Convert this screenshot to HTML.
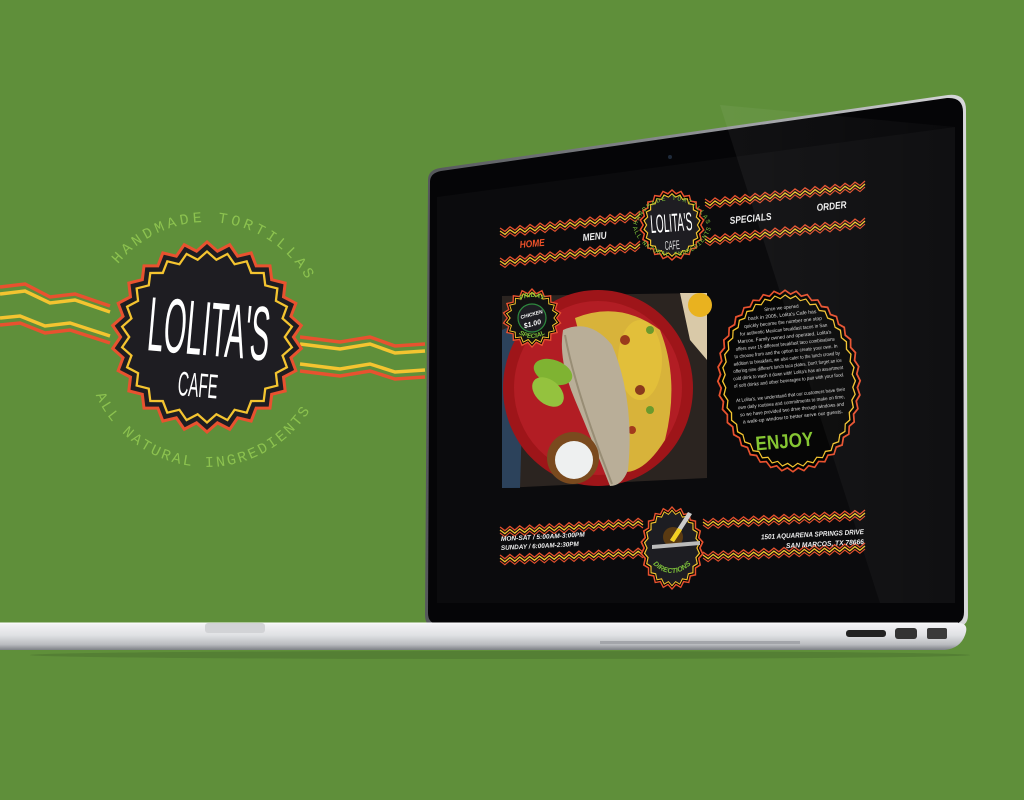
<!DOCTYPE html>
<html><head><meta charset="utf-8">
<style>
html,body{margin:0;padding:0;width:1024px;height:800px;overflow:hidden;background:#5f8f3a;}
svg{display:block}
.hand{font-family:"Liberation Sans",sans-serif;font-weight:bold;font-style:italic}
</style></head><body>
<svg id="s" width="1024" height="800" viewBox="0 0 1024 800" xmlns="http://www.w3.org/2000/svg">
<defs>
<linearGradient id="base" x1="0" y1="0" x2="0" y2="1">
<stop offset="0" stop-color="#f4f4f6"/><stop offset="0.45" stop-color="#e0e1e4"/><stop offset="0.8" stop-color="#b9bbbf"/><stop offset="1" stop-color="#7d8086"/>
</linearGradient>
<linearGradient id="rim" x1="0" y1="0" x2="1" y2="0">
<stop offset="0" stop-color="#55575b"/><stop offset="0.6" stop-color="#9a9ca0"/><stop offset="1" stop-color="#d8d8da"/>
</linearGradient>
<linearGradient id="glare" x1="0" y1="0" x2="1" y2="0">
<stop offset="0" stop-color="#fff" stop-opacity="0.05"/><stop offset="1" stop-color="#fff" stop-opacity="0.02"/>
</linearGradient>
<path id="arcTop" d="M 92 337 A 115 115 0 0 1 322 337"/>
<path id="arcBot" d="M 85 345 A 122 122 0 0 0 329 345"/>
<path id="arcTopS" d="M 637 225 A 37 37 0 0 1 707 225"/>
<path id="arcBotS" d="M 633 228 A 41 41 0 0 0 711 228"/>
<path id="arcDir" d="M 645 548 A 28 34 0 0 0 699 548"/>
<path id="arcFri" d="M 511 318 A 21 21 0 0 1 553 318"/>
<path id="arcSpec" d="M 509 315 A 23 23 0 0 0 555 315"/>
</defs>
<g id="left"></g>
<path d="M428 180 Q428 170 440 168 L948 95 Q966 93 966 110 L968 615 Q968 627 955 627 L436 627 Q425 627 425 615 Z" fill="url(#rim)"/>
<path d="M430 182 Q430 173 441 171 L947 98 Q963 97 963 112 L964 612 Q964 624 952 624 L439 624 Q428 624 428 613 Z" fill="#050507"/>
<path d="M437 197 L955 127 L955 603 L437 603 Z" fill="#0b0b0d"/>
<circle cx="670" cy="157" r="2" fill="#1e2a3a"/>
<g id="site"></g>
<path d="M720 105 L955 127 L955 603 L880 603 Z" fill="url(#glare)"/>
<path d="M0 623 L958 623 Q968 623 966 632 Q962 648 945 650 L0 650 Z" fill="url(#base)"/>
<path d="M0 623 L958 623" stroke="#fff" stroke-width="1"/>
<rect x="205" y="623" width="60" height="10" rx="3" fill="#d2d3d6"/>
<rect x="600" y="641" width="200" height="3" fill="#a3a5aa"/>
<rect x="846" y="630" width="40" height="7" rx="3" fill="#222"/>
<rect x="895" y="628" width="22" height="11" rx="3" fill="#333"/>
<rect x="927" y="628" width="20" height="11" rx="2" fill="#3a3a3a"/>
<ellipse cx="500" cy="655" rx="470" ry="4" fill="#4c7530" opacity="0.6"/>
</svg>
<script>
var NS="http://www.w3.org/2000/svg";
function el(parent,tag,attrs,text){var e=document.createElementNS(NS,tag);for(var k in attrs)e.setAttribute(k,attrs[k]);if(text!=null)e.textContent=text;parent.appendChild(e);return e;}
function star(cx,cy,rx,ry,n,d){var p=[];for(var i=0;i<2*n;i++){var a=i*Math.PI/n;var f=(i%2?1:1-d);p.push((cx+rx*f*Math.cos(a)).toFixed(1)+","+(cy+ry*f*Math.sin(a)).toFixed(1));}return p.join(" ");}
function zig(x1,y1,x2,y2,step,amp){var dx=x2-x1,dy=y2-y1,L=Math.sqrt(dx*dx+dy*dy),n=Math.round(L/step),p=[];for(var i=0;i<=n;i++){var t=i/n;var o=(i%2?amp:-amp);p.push((x1+dx*t).toFixed(1)+","+(y1+dy*t+o).toFixed(1));}return p.join(" ");}
var L=document.getElementById("left"),S=document.getElementById("site");
function pl(g,pts,c,w){el(g,"polyline",{points:pts,fill:"none",stroke:c,"stroke-width":w,"stroke-linejoin":"miter"});}
pl(L,"0,287 25,284 50,297 75,294 110,306","#e8522f",3.5);
pl(L,"0,294 25,291 50,303 75,300 110,312","#f4c430",3.5);
pl(L,"0,318 20,316 45,326 70,323 110,336","#f4c430",3.5);
pl(L,"0,325 20,323 45,333 70,330 110,343","#e8522f",3.5);
pl(L,"300,337 340,342 370,337 395,346 425,344","#e8522f",3.5);
pl(L,"300,344 340,349 370,344 395,353 425,351","#f4c430",3.5);
pl(L,"300,364 340,369 370,364 395,372 425,370","#f4c430",3.5);
pl(L,"300,371 340,376 370,371 395,379 425,377","#e8522f",3.5);
el(L,"polygon",{points:star(207,337,97,97,26,0.09),fill:"#e8522f"});
el(L,"polygon",{points:star(207,337,93,93,26,0.09),fill:"#1e1d22"});
el(L,"polygon",{points:star(207,337,87,87,26,0.09),fill:"#f4c430"});
el(L,"polygon",{points:star(207,337,84,84,26,0.09),fill:"#1e1d22"});
var t=el(L,"text",{fill:"#8cc24f","font-family":"Liberation Mono,monospace","font-size":"15","letter-spacing":"3.5"});el(t,"textPath",{href:"#arcTop",startOffset:"53%","text-anchor":"middle"},"HANDMADE TORTILLAS");
t=el(L,"text",{fill:"#8cc24f","font-family":"Liberation Mono,monospace","font-size":"15","letter-spacing":"2.5"});el(t,"textPath",{href:"#arcBot",startOffset:"48%","text-anchor":"middle"},"ALL NATURAL INGREDIENTS");
el(L,"text",{x:0,y:0,fill:"#fff","font-family":"Liberation Sans,sans-serif","font-size":"44",textLength:"122",lengthAdjust:"spacingAndGlyphs",transform:"translate(146,350) rotate(5) scale(1,1.75)"},"LOLITA'S");
el(L,"text",{x:0,y:0,fill:"#fff","font-family":"Liberation Sans,sans-serif","font-size":"18",textLength:"40",lengthAdjust:"spacingAndGlyphs",transform:"translate(177,395) rotate(5) scale(1,1.9)"},"CAFE");
function band(x1,y1,x2,y2){pl(S,zig(x1,y1,x2,y2,5,2),"#e8522f",1.3);pl(S,zig(x1,y1+3,x2,y2+3,5,2),"#f4c430",1.3);pl(S,zig(x1,y1+6,x2,y2+6,5,2),"#e8522f",1.1);}
band(500,230,640,213);band(705,201,865,183);
band(500,260,640,243);band(705,238,865,220);
band(500,529,643,520);band(703,521,865,512);
band(500,557,643,550);band(703,554,865,545);
el(S,"polygon",{points:star(672,225,33,36,22,0.1),fill:"#e8522f"});
el(S,"polygon",{points:star(672,225,31,34,22,0.1),fill:"#000"});
el(S,"polygon",{points:star(672,225,29,32,22,0.1),fill:"#f4c430"});
el(S,"polygon",{points:star(672,225,27.5,30.5,22,0.1),fill:"#1e1d22"});
t=el(S,"text",{fill:"#7dc03a","font-family":"Liberation Mono,monospace","font-size":"6.5","letter-spacing":"1.2"});el(t,"textPath",{href:"#arcTopS",startOffset:"50%","text-anchor":"middle"},"HANDMADE TORTILLAS");
t=el(S,"text",{fill:"#7dc03a","font-family":"Liberation Mono,monospace","font-size":"6.5","letter-spacing":"0.6"});el(t,"textPath",{href:"#arcBotS",startOffset:"50%","text-anchor":"middle"},"ALL NATURAL INGREDIENTS");
el(S,"text",{x:0,y:0,fill:"#fff","font-family":"Liberation Sans,sans-serif","font-size":"16",textLength:"42",lengthAdjust:"spacingAndGlyphs",transform:"translate(651,233) rotate(-4) scale(1,1.6)"},"LOLITA'S");
el(S,"text",{x:0,y:0,fill:"#ddd","font-family":"Liberation Sans,sans-serif","font-size":"8",textLength:"15",lengthAdjust:"spacingAndGlyphs",transform:"translate(665,250) rotate(-4) scale(1,1.6)"},"CAFE");
function nav(x,y,s,c,r,w){el(S,"text",{x:x,y:y,fill:c,"class":"hand","font-size":"10",textLength:w,lengthAdjust:"spacingAndGlyphs",transform:"rotate("+r+" "+x+" "+y+")"},s);}
nav(520,248,"HOME","#f0522a",-5,25);nav(583,241,"MENU","#eee",-6,24);nav(730,224,"SPECIALS","#eee",-6,42);nav(817,211,"ORDER","#eee",-6,30);
var g=el(S,"g",{});
el(g,"polygon",{points:"502,296 707,293 707,478 502,488",fill:"#2b2420"});
el(g,"polygon",{points:"680,293 707,293 707,360 690,340",fill:"#d9c9a8"});
el(g,"circle",{cx:700,cy:305,r:12,fill:"#e9b21f"});
el(g,"polygon",{points:"502,330 525,320 520,488 502,488",fill:"#2d4a6a",opacity:"0.8"});
el(g,"ellipse",{cx:598,cy:388,rx:95,ry:98,fill:"#9e1519"});
el(g,"ellipse",{cx:598,cy:388,rx:84,ry:87,fill:"#b21d24"});
el(g,"path",{d:"M575 318 Q620 300 660 330 Q680 380 665 440 Q640 480 615 470 Z",fill:"#d8b33a"});
el(g,"ellipse",{cx:640,cy:360,rx:22,ry:40,fill:"#e2bf3a"});
el(g,"circle",{cx:625,cy:340,r:5,fill:"#9a3a1c"});el(g,"circle",{cx:650,cy:330,r:4,fill:"#6b9a2c"});el(g,"circle",{cx:640,cy:390,r:5,fill:"#8a3a1c"});el(g,"circle",{cx:650,cy:410,r:4,fill:"#6b9a2c"});el(g,"circle",{cx:632,cy:430,r:4,fill:"#a23a1c"});
el(g,"path",{d:"M563 330 Q590 318 612 345 Q635 400 628 470 Q622 486 610 486 Q592 440 575 400 Q558 360 563 330 Z",fill:"#b9ae98"});
el(g,"path",{d:"M565 335 Q575 390 612 484",fill:"none",stroke:"#988d75","stroke-width":"2"});
el(g,"ellipse",{cx:553,cy:372,rx:20,ry:12,fill:"#7fb332",transform:"rotate(20 553 372)"});
el(g,"ellipse",{cx:548,cy:392,rx:18,ry:12,fill:"#94c23e",transform:"rotate(40 548 392)"});
el(g,"circle",{cx:573,cy:458,r:26,fill:"#7a4a1e"});
el(g,"circle",{cx:574,cy:460,r:19,fill:"#eef0f0"});
el(S,"polygon",{points:star(532,318,30,30,18,0.15),fill:"#e8522f"});
el(S,"polygon",{points:star(532,318,28,28,18,0.15),fill:"#000"});
el(S,"polygon",{points:star(532,318,26.5,26.5,18,0.15),fill:"#f4c430"});
el(S,"polygon",{points:star(532,318,25,25,18,0.15),fill:"#111"});
el(S,"circle",{cx:532,cy:318,r:14,fill:"#1d1d22",stroke:"#2e8a3e","stroke-width":"1.2"});
t=el(S,"text",{fill:"#7dc03a","class":"hand","font-size":"6.5"});el(t,"textPath",{href:"#arcFri",startOffset:"50%","text-anchor":"middle"},"FRIDAY");
t=el(S,"text",{fill:"#7dc03a","class":"hand","font-size":"6.5"});el(t,"textPath",{href:"#arcSpec",startOffset:"50%","text-anchor":"middle"},"SPECIAL");
el(S,"text",{x:532,y:316,fill:"#fff","class":"hand","font-size":"5","text-anchor":"middle",transform:"rotate(-15 532 316)"},"CHICKEN");
el(S,"text",{x:533,y:326,fill:"#fff","class":"hand","font-size":"7","text-anchor":"middle",transform:"rotate(-15 533 326)"},"$1.00");
el(S,"polygon",{points:star(789,381,72,92,40,0.04),fill:"#e8522f",transform:"rotate(-6 789 381)"});
el(S,"polygon",{points:star(789,381,70,90,40,0.04),fill:"#000",transform:"rotate(-6 789 381)"});
el(S,"polygon",{points:star(789,381,67,87,40,0.04),fill:"#f4c430",transform:"rotate(-6 789 381)"});
el(S,"polygon",{points:star(789,381,65.5,85.5,40,0.04),fill:"#060606",transform:"rotate(-6 789 381)"});
var lines=["Since we opened","back in 2005, Lolita's Cafe has","quickly become the number one stop","for authentic Mexican breakfast tacos in San","Marcos. Family owned and operated, Lolita's","offers over 15 different breakfast taco combinations","to choose from and the option to create your own. In","addition to breakfast, we also cater to the lunch crowd by","offering nine different lunch taco plates. Don't forget an ice","cold drink to wash it down with! Lolita's has an assortment","of soft drinks and other beverages to pair with your food.","","At Lolita's, we understand that our customers have their","own daily routines and commitments to make on time,","so we have provided two drive through windows and","a walk-up window to better serve our guests."];
var tg=el(S,"g",{transform:"rotate(-6 789 380)"});
for(var i=0;i<lines.length;i++){if(!lines[i])continue;var y=309+i*7.3;var dy=(y-2-381)/85;var w=2*63*Math.sqrt(Math.max(0,1-dy*dy))*0.88;var est=lines[i].length*2.3;w=Math.min(w,est);
el(tg,"text",{x:789,y:y,fill:"#ddd","font-family":"Liberation Sans,sans-serif","font-size":"5",textLength:w.toFixed(1),lengthAdjust:"spacingAndGlyphs","text-anchor":"middle"},lines[i]);}
el(S,"text",{x:785,y:448,fill:"#86c633","font-family":"Liberation Sans,sans-serif","font-weight":"bold","font-size":"20",textLength:"58",lengthAdjust:"spacingAndGlyphs","text-anchor":"middle",transform:"rotate(-5 785 448)"},"ENJOY");
el(S,"polygon",{points:star(672,548,32,42,22,0.1),fill:"#e8522f"});
el(S,"polygon",{points:star(672,548,30,40,22,0.1),fill:"#000"});
el(S,"polygon",{points:star(672,548,28.5,38.5,22,0.1),fill:"#f4c430"});
el(S,"polygon",{points:star(672,548,27,37,22,0.1),fill:"#1d1d22"});
el(S,"circle",{cx:673,cy:537,r:10,fill:"#5a3a12"});
el(S,"polygon",{points:"652,545 700,541 700,545 652,549",fill:"#bbb"});
el(S,"polygon",{points:"688,512 692,514 674,542 670,540",fill:"#ccc"});
el(S,"polygon",{points:"678,528 682,530 674,542 670,540",fill:"#f4d020"});
t=el(S,"text",{fill:"#7dc03a","class":"hand","font-size":"7"});el(t,"textPath",{href:"#arcDir",startOffset:"50%","text-anchor":"middle"},"DIRECTIONS");
el(S,"text",{x:501,y:541,fill:"#eee","class":"hand","font-size":"6.5",textLength:"84",lengthAdjust:"spacingAndGlyphs",transform:"rotate(-3 501 541)"},"MON-SAT / 5:00AM-3:00PM");
el(S,"text",{x:501,y:550,fill:"#eee","class":"hand","font-size":"6.5",textLength:"78",lengthAdjust:"spacingAndGlyphs",transform:"rotate(-3 501 550)"},"SUNDAY / 6:00AM-2:30PM");
el(S,"text",{x:864,y:534,fill:"#eee","class":"hand","font-size":"7",textLength:"103",lengthAdjust:"spacingAndGlyphs","text-anchor":"end",transform:"rotate(-3 864 534)"},"1501 AQUARENA SPRINGS DRIVE");
el(S,"text",{x:864,y:544,fill:"#eee","class":"hand","font-size":"7",textLength:"78",lengthAdjust:"spacingAndGlyphs","text-anchor":"end",transform:"rotate(-3 864 544)"},"SAN MARCOS, TX 78666");
</script>
</body></html>
